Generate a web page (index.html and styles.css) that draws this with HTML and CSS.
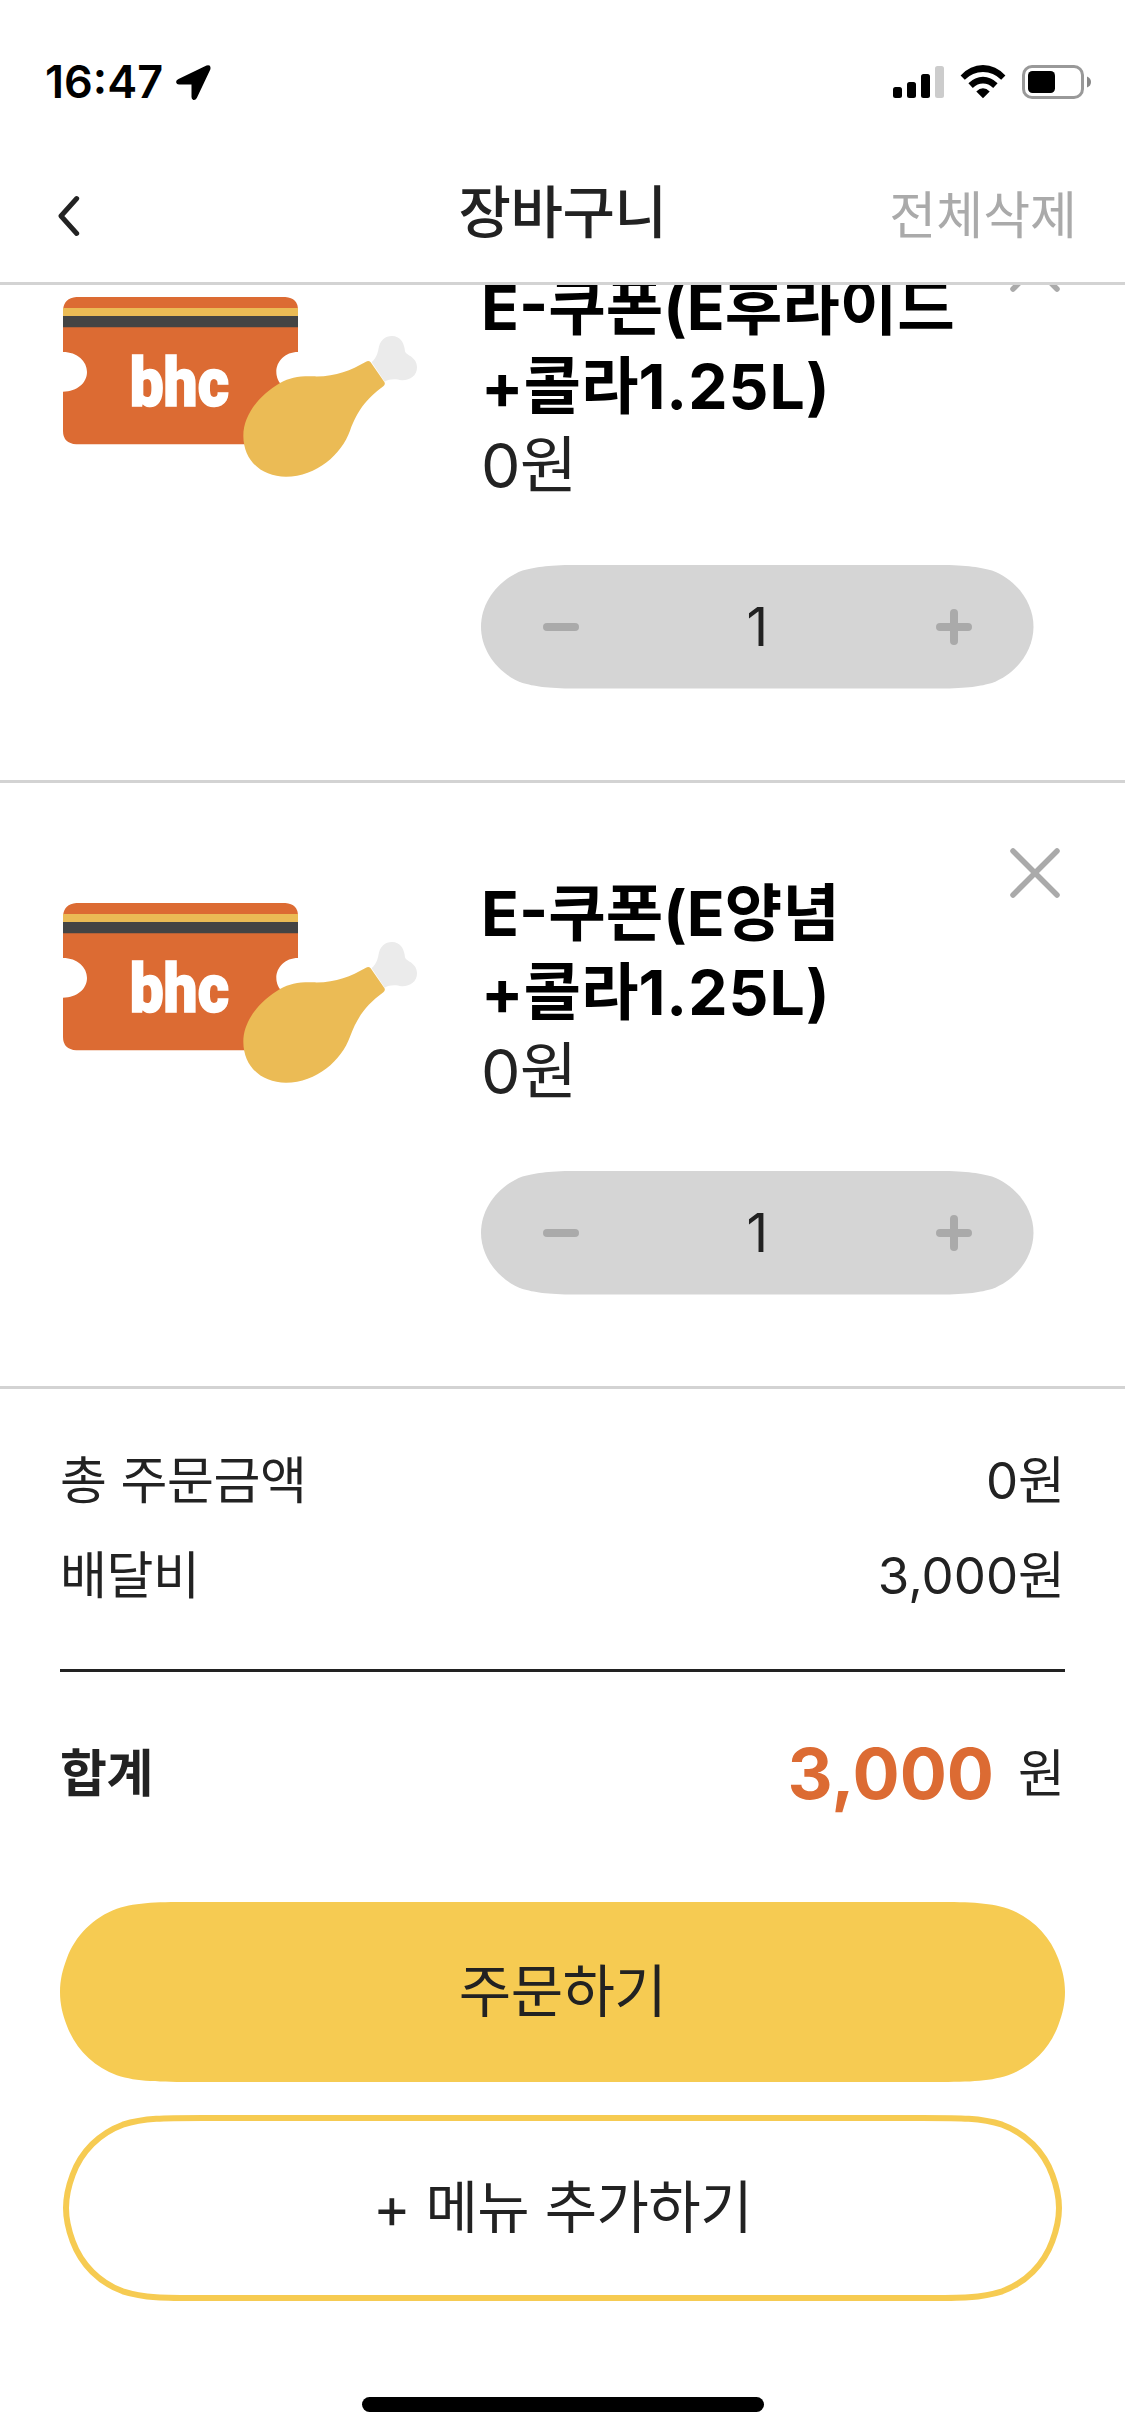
FILE: index.html
```
<!DOCTYPE html>
<html lang="ko">
<head>
<meta charset="utf-8">
<meta name="viewport" content="width=device-width">
<title>장바구니</title>
<link rel="stylesheet" href="styles.css">
</head>
<body>
<svg class="defs" aria-hidden="true">
  <symbol id="coupon" viewBox="69 69 1062 540">
    <path fill="#dc6b33" d="M109 69H736Q774 72 774 108V234C735 234 709 262 709 294C709 325 735 353 774 353V511H109Q69 508 69 471V353C112 353 141 326 141 294C141 262 112 234 69 234V108Q72 72 109 69Z"/>
    <path fill="#ebbb55" d="M69 102H774V126H69Z"/>
    <path fill="#444" d="M69 126H774V160H69Z"/>
    <text class="brand" x="269" y="395" textLength="298" lengthAdjust="spacingAndGlyphs">bhc</text>
    <path fill="#ebebeb" d="M995 265C1010 250 1013 238 1016 222C1020 200 1035 186 1056 186C1080 186 1093 205 1095 232C1098 245 1131 248 1131 280C1131 305 1110 320 1085 319C1070 315 1050 313 1034 323Z"/>
    <path fill="#ebbb55" d="M978 263Q986 258 992 265L1033 324Q1037 331 1030 337C975 378 952 412 930 470C905 540 830 608 738 608C665 608 610 560 610 485C610 425 655 365 720 327C750 311 775 306 820 307C885 309 930 290 978 263Z"/>
  </symbol>
  <symbol id="close" viewBox="0 0 50 50">
    <path d="M3 3L47 47M47 3L3 47" fill="none" stroke="#aaa" stroke-width="5.500" stroke-linecap="round"/>
  </symbol>
  <symbol id="minus" viewBox="0 0 36 36">
    <rect x="0" y="14" width="36" height="8" rx="4" fill="#aaa"/>
  </symbol>
  <symbol id="plus" viewBox="0 0 36 36">
    <path fill="#aaa" d="M4 14H14V4a4 4 0 0 1 8 0V14H32a4 4 0 0 1 0 8H22V32a4 4 0 0 1-8 0V22H4a4 4 0 0 1 0-8Z"/>
  </symbol>
</svg>

<header class="header">
  <div class="status">
    <span class="time">16:47</span>
    <svg class="location" viewBox="0 0 35 35"><path d="M2.5 14L30.5 .5Q35.500 -.8 34.300 4.500L20.800 33Q19.500 35.400 17.300 34.900Q15.500 34.300 15.500 32V19.500H3Q.6 19.300 .2 17.400Q-.2 15.200 2.500 14Z"/></svg>
    <span class="indicators">
      <svg width="51" height="34" viewBox="0 0 51 34"><rect x="0" y="22" width="9" height="11" rx="2.500"/><rect x="14" y="17" width="9" height="16" rx="2.500"/><rect x="28" y="9" width="9" height="24" rx="2.500"/><rect x="42" y="1" width="9" height="32" rx="2.500" fill="#ccc"/></svg>
      <svg width="46" height="34" viewBox="0 0 46 34"><path d="M.6 10.600Q10 0 23 0T45.400 10.600L41.200 14.800Q33.500 7 23 7T4.800 14.800ZM8.400 18.200Q15 11.700 23 11.700T37.600 18.200L33.200 22.900Q28.500 18.500 23 18.500T12.800 22.900ZM16.300 26.600Q19.500 23.300 23 23.300T29.700 26.600L23 33.300Z"/></svg>
      <svg width="70" height="34" viewBox="0 0 70 34"><rect x="1.500" y="1.500" width="59" height="31" rx="8.500" fill="none" stroke="#999" stroke-width="3"/><rect x="6" y="6" width="27" height="22" rx="4.500"/><path fill="#888" d="M65 11.500Q69 13 69 17T65 22.500Z"/></svg>
    </span>
  </div>
  <nav class="nav">
    <svg class="back" viewBox="0 0 22 42"><path d="M18.700 3.500L3 21L18.700 38.500" fill="none" stroke="#222" stroke-width="4.900" stroke-linecap="round" stroke-linejoin="round"/></svg>
    <h1 class="title">장바구니</h1>
    <button class="clear">전체삭제</button>
  </nav>
</header>

<main>
  <section class="cart">
    <article class="item">
      <svg class="thumb"><use href="#coupon"/></svg>
      <div class="info">
        <h2 class="name">E-쿠폰(E후라이드<br>+콜라<span class="volume">1.25L)</span></h2>
        <p class="price">0원</p>
        <div class="stepper">
          <svg class="pill" viewBox="0 0 552.500 123.500"><path d="M94 0H458.500C487 0 500 2.500 511 5.500C536 15 552.500 38 552.500 61.750C552.500 85.500 536 108.500 511 118C500 121 487 123.500 458.500 123.500H94C65.500 123.500 52.500 121 41.500 118C16.500 108.500 0 85.500 0 61.750C0 38 16.500 15 41.500 5.500C52.500 2.500 65.500 0 94 0Z"/></svg>
          <div class="controls"><svg class="step"><use href="#minus"/></svg><span>1</span><svg class="step"><use href="#plus"/></svg></div>
        </div>
      </div>
      <svg class="close"><use href="#close"/></svg>
    </article>
    <article class="item">
      <svg class="thumb"><use href="#coupon"/></svg>
      <div class="info">
        <h2 class="name">E-쿠폰(E양념<br>+콜라<span class="volume">1.25L)</span></h2>
        <p class="price">0원</p>
        <div class="stepper">
          <svg class="pill" viewBox="0 0 552.500 123.500"><path d="M94 0H458.500C487 0 500 2.500 511 5.500C536 15 552.500 38 552.500 61.750C552.500 85.500 536 108.500 511 118C500 121 487 123.500 458.500 123.500H94C65.500 123.500 52.500 121 41.500 118C16.500 108.500 0 85.500 0 61.750C0 38 16.500 15 41.500 5.500C52.500 2.500 65.500 0 94 0Z"/></svg>
          <div class="controls"><svg class="step"><use href="#minus"/></svg><span>1</span><svg class="step"><use href="#plus"/></svg></div>
        </div>
      </div>
      <svg class="close"><use href="#close"/></svg>
    </article>
  </section>

  <section class="summary">
    <div class="row"><span class="label">총 주문금액</span><span>0원</span></div>
    <div class="row"><span class="label">배달비</span><span>3,000원</span></div>
    <div class="total"><strong class="label">합계</strong><strong class="amount">3,000</strong><span>원</span></div>
  </section>

  <section class="actions">
    <button class="action">
      <svg class="shape" viewBox="0 0 1005 180"><path fill="#f6cb52" d="M137 0H868C907 0 927 0 948.200 6.700C971.500 15.200 989.800 33.500 998.300 56.800C1002.500 68 1005 78 1005 90C1005 102 1002.500 112 998.300 123.200C989.800 146.500 971.500 164.800 948.200 173.300C927 180 907 180 868 180H137C98 180 78 180 56.800 173.300C33.500 164.800 15.200 146.500 6.700 123.200C2.500 112 0 102 0 90C0 78 2.500 68 6.700 56.800C15.200 33.500 33.500 15.200 56.800 6.700C78 0 98 0 137 0Z"/></svg>
      <span>주문하기</span>
    </button>
    <button class="action action-outline">
      <svg class="shape" viewBox="-6 -3 1005 186"><path fill="none" stroke="#f6cb52" stroke-width="6" d="M137 0H856C895 0 915 0 936.200 6.700C959.500 15.200 977.800 33.500 986.300 56.800C990.500 68 993 78 993 90C993 102 990.500 112 986.300 123.200C977.800 146.500 959.500 164.800 936.200 173.300C915 180 895 180 856 180H137C98 180 78 180 56.800 173.300C33.500 164.800 15.200 146.500 6.700 123.200C2.500 112 0 102 0 90C0 78 2.500 68 6.700 56.800C15.200 33.500 33.500 15.200 56.800 6.700C78 0 98 0 137 0Z"/></svg>
      <span>+ 메뉴 추가하기</span>
    </button>
  </section>
</main>
<div class="home-bar"></div>
</body>
</html>
```
FILE: styles.css
```
* {
  box-sizing: border-box;
}

body {
  margin: 0;
  width: 1125px;
  height: 2436px;
  overflow: hidden;
  background: #fff;
  color: #222;
  font-family: Inter, "Noto Sans CJK KR", sans-serif;
  display: flex;
  flex-direction: column;
}

h1, h2, p {
  margin: 0;
}

button {
  border: 0;
  padding: 0;
  background: none;
  color: inherit;
  font: inherit;
}

svg {
  display: block;
  flex: none;
}

.defs {
  position: absolute;
  width: 0;
  height: 0;
}

/* Header */
.header {
  flex: none;
  height: 285px;
  border-bottom: 3px solid #d3d3d3;
}

.status {
  height: 132px;
  padding: 64px 33px 32px 45px;
  display: flex;
  align-items: center;
  color: #000;
}

.time {
  font-size: 45px;
  font-weight: 600;
  line-height: 36px;
}

.location {
  width: 35px;
  height: 35px;
  margin-left: 13px;
}

.indicators {
  margin-left: auto;
  display: flex;
  align-items: center;
  gap: 16px;
}

.nav {
  height: 150px;
  padding: 18px 48px 0;
  display: grid;
  grid-template-columns: 1fr auto 1fr;
  align-items: center;
}

.back {
  width: 22px;
  height: 42px;
  margin-left: 10px;
}

.title {
  margin-bottom: 6px;
  font-size: 57px;
  font-weight: 500;
  line-height: 60px;
  letter-spacing: -0.5px;
}

.clear {
  justify-self: end;
  font-size: 51px;
  line-height: 60px;
  color: #aaa;
}

/* Cart items */
main {
  flex: none;
}

.cart {
  height: 1104px;
  overflow: hidden;
  display: flex;
  flex-direction: column;
  justify-content: flex-end;
}

.item {
  flex: none;
  height: 606px;
  border-bottom: 3px solid #d3d3d3;
  display: grid;
  grid-template-columns: 481px 529px 115px;
  align-items: start;
}

.thumb {
  width: 354px;
  height: 180px;
  margin: 120px 0 0 63px;
}

.brand {
  fill: #fff;
  stroke: #fff;
  stroke-width: 5px;
  font-family: Roboto, sans-serif;
  font-weight: 900;
  font-size: 204px;
}

.info {
  width: 552.5px;
  padding-top: 91px;
}

.name,
.price {
  font-size: 62.5px;
  line-height: 79px;
}

.name {
  color: #000;
  font-weight: 700;
  white-space: nowrap;
}

.volume {
  letter-spacing: 1px;
}

.price {
  font-weight: 400;
  letter-spacing: -0.8px;
}

.stepper {
  margin-top: 60px;
  height: 123.5px;
  display: grid;
}

.pill {
  grid-area: 1 / 1;
  width: 552.5px;
  height: 123.5px;
  fill: #d5d5d5;
}

.controls {
  grid-area: 1 / 1;
  padding: 0 62px;
  display: flex;
  align-items: center;
  justify-content: space-between;
  font-size: 53px;
}

.step {
  width: 36px;
  height: 36px;
}

.close {
  width: 50px;
  height: 50px;
  margin-top: 65px;
}

/* Order summary */
.summary {
  padding: 44px 60px 0;
  font-size: 51px;
}

.row {
  display: flex;
  justify-content: space-between;
  line-height: 95px;
}

.label {
  letter-spacing: -0.4px;
}

.total {
  margin-top: 46px;
  padding-top: 60px;
  height: 147px;
  border-top: 3px solid #222;
  display: flex;
  align-items: center;
  line-height: 84px;
}

.amount {
  margin: 0 24px 0 auto;
  color: #dc6b33;
  font-size: 70px;
}

/* Actions */
.actions {
  padding: 86px 60px 0;
  display: flex;
  flex-direction: column;
  gap: 33px;
}

.action {
  display: grid;
  place-items: center;
  height: 180px;
  font-size: 57px;
  line-height: 80px;
  letter-spacing: -0.6px;
}

.action > * {
  grid-area: 1 / 1;
}

.action-outline {
  height: 186px;
}

.shape {
  width: 100%;
  height: 100%;
}

.home-bar {
  width: 402px;
  height: 15px;
  margin: 96px auto 0;
  border-radius: 8px;
  background: #000;
}
```
